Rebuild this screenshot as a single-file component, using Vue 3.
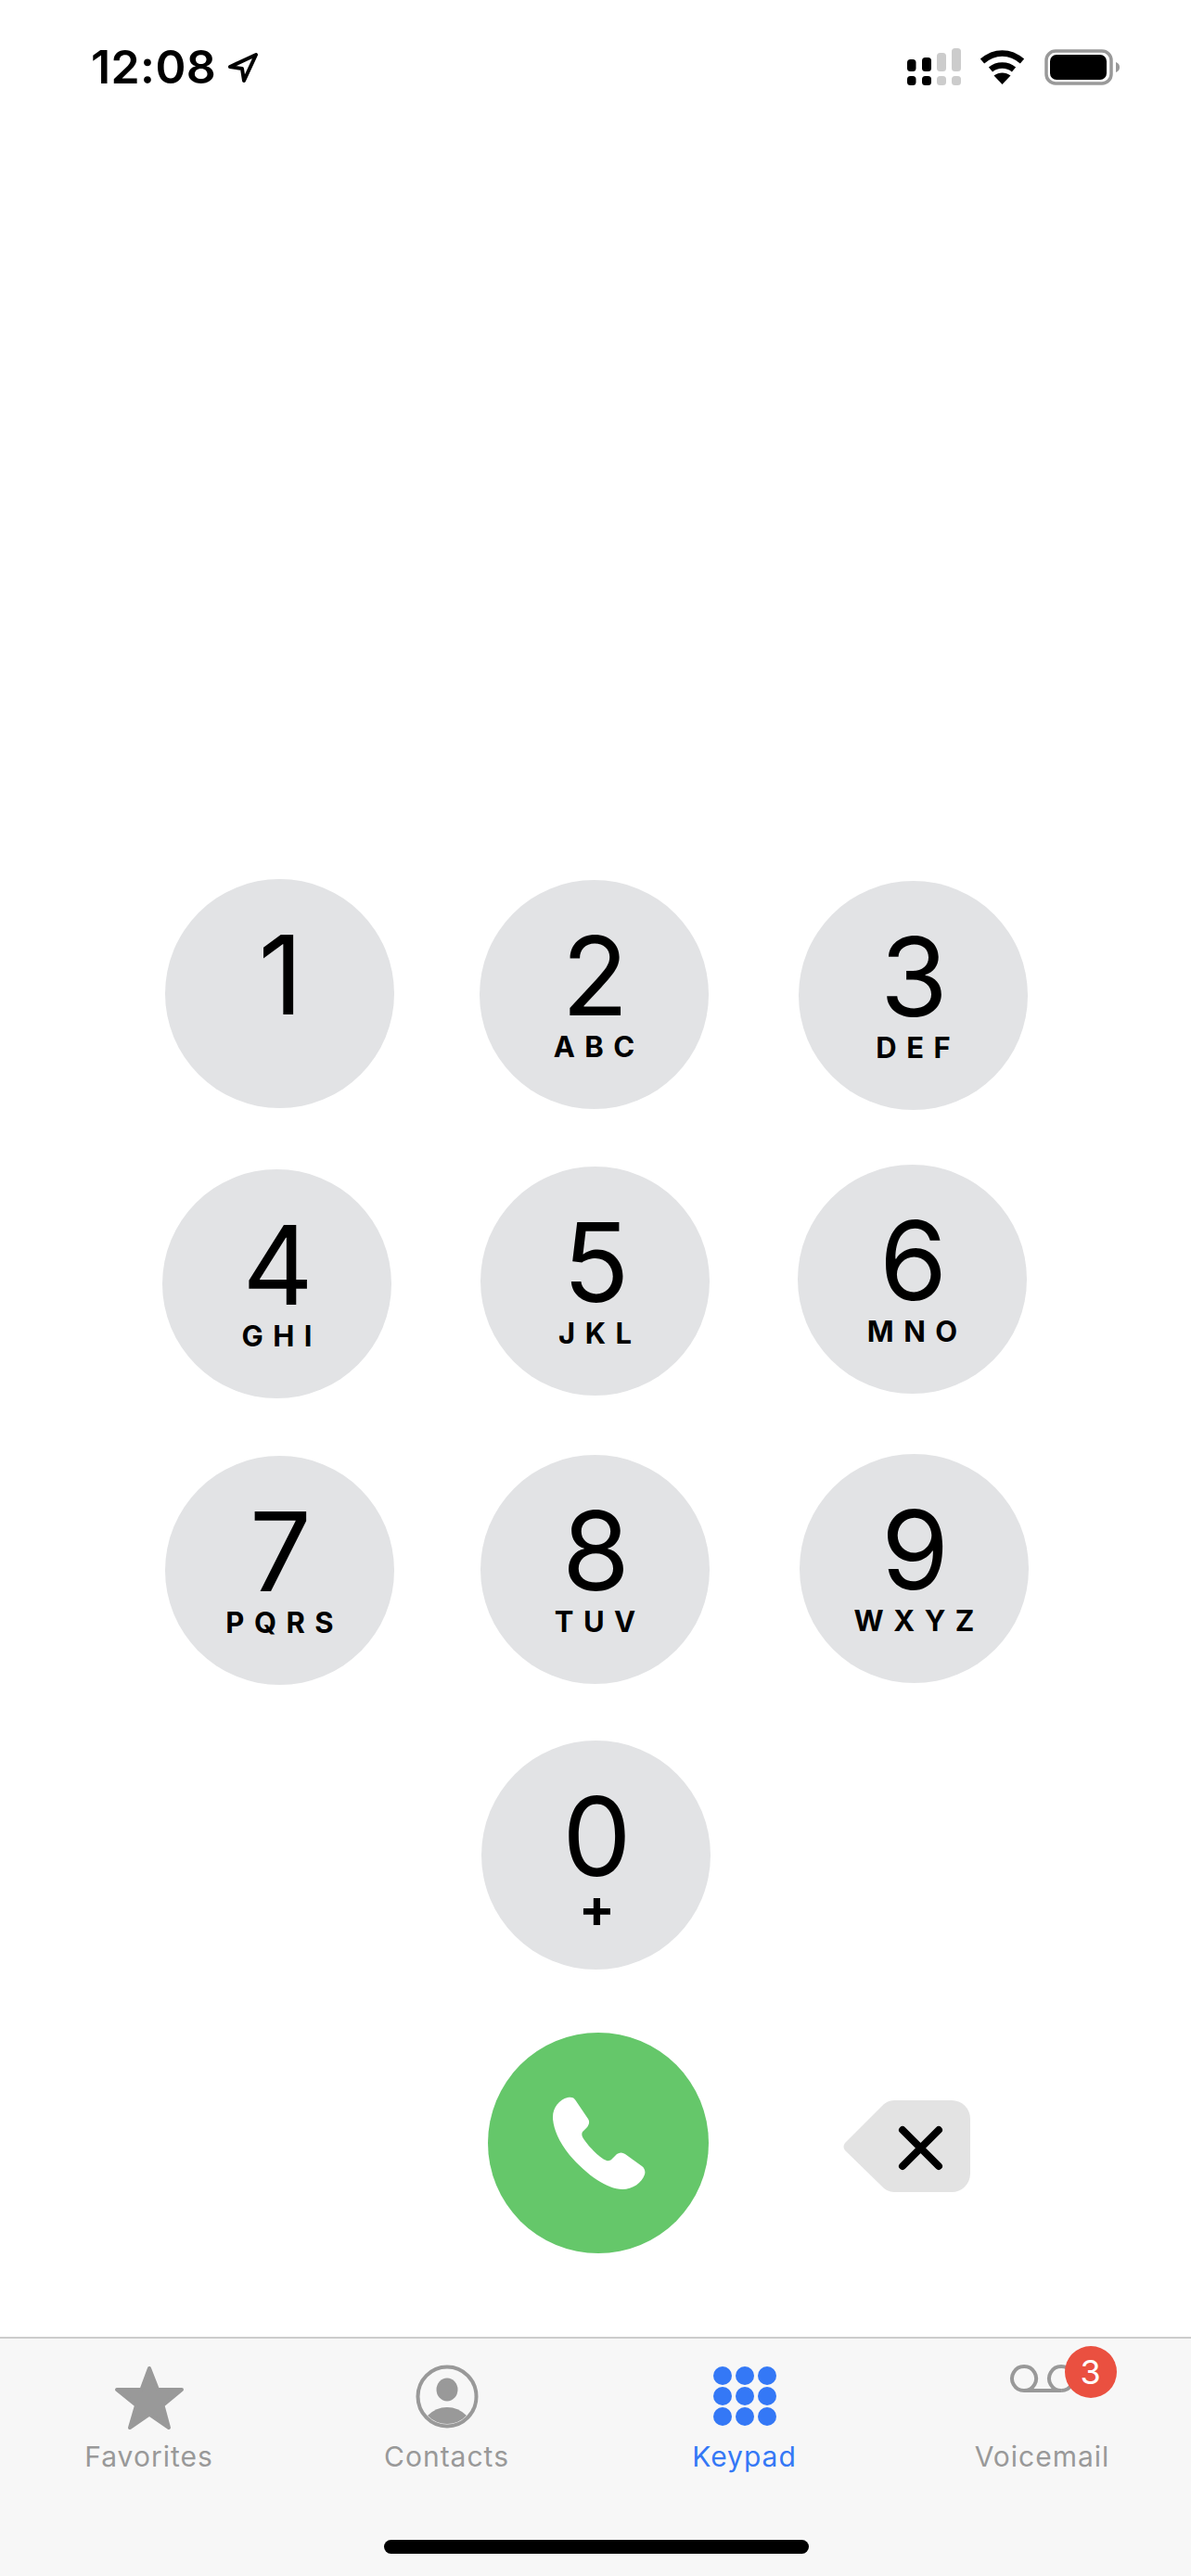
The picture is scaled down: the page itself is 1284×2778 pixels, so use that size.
<script setup>
const rows = [
  { gap: 0, keys: [
    { d: '1', l: '', ml: 178, mt: 0 },
    { d: '2', l: 'ABC', ml: 92, mt: 1 },
    { d: '3', l: 'DEF', ml: 97, mt: 2 },
  ] },
  { gap: 59, keys: [
    { d: '4', l: 'GHI', ml: 175, mt: 5 },
    { d: '5', l: 'JKL', ml: 96, mt: 2 },
    { d: '6', l: 'MNO', ml: 95, mt: 0 },
  ] },
  { gap: 60, keys: [
    { d: '7', l: 'PQRS', ml: 178, mt: 2 },
    { d: '8', l: 'TUV', ml: 93, mt: 1 },
    { d: '9', l: 'WXYZ', ml: 97, mt: 0 },
  ] },
  { gap: 60, keys: [
    { d: '0', l: '+', ml: 519, mt: 0 },
  ] },
]
const dots = [779, 803, 827].flatMap(x => [2562, 2584, 2606].map(y => ({ x, y })))
</script>

<template>
  <div class="phone">
    <header class="status">
      <div class="status-left">
        <span class="time">12:08</span>
        <svg class="arrow" width="34" height="34" viewBox="244 56 34 34">
          <path d="M247 72 L275 59 L262 87 L260 74 Z" fill="none" stroke="#000" stroke-width="4" stroke-linejoin="round" />
        </svg>
      </div>
      <div class="status-right">
        <svg width="58" height="40" viewBox="979 52 58 40">
          <rect x="979" y="64" width="9.5" height="13" rx="3.5" />
          <rect x="995" y="62" width="10" height="15" rx="3.5" />
          <rect x="1011" y="57" width="10" height="20" rx="3.5" fill="#ccc" />
          <rect x="1027" y="52" width="10" height="25" rx="3.5" fill="#ccc" />
          <rect x="979" y="82" width="9.5" height="10" rx="3.5" />
          <rect x="995" y="82" width="10" height="10" rx="3.5" />
          <rect x="1011" y="82" width="10" height="10" rx="3.5" fill="#ccc" />
          <rect x="1027" y="82" width="10" height="10" rx="3.5" fill="#ccc" />
        </svg>
        <svg class="wifi" width="50" height="38" viewBox="1057 54 50 38">
          <path d="M1060 66 C1073 54.500 1090 54.500 1103 66" fill="none" stroke="#000" stroke-width="6.500" />
          <path d="M1069 75 C1076 69 1087 69 1094 75" fill="none" stroke="#000" stroke-width="6.500" />
          <path d="M1072.500 81.500 C1078 77.500 1085 77.500 1090.500 81.500 L1081.500 91 Z" />
        </svg>
        <svg class="battery" width="82" height="40" viewBox="1127 52 82 40">
          <rect x="1129" y="55" width="70" height="35" rx="10" fill="none" stroke="#999" stroke-width="3.500" />
          <rect x="1133" y="59" width="61" height="27" rx="7" />
          <path d="M1204 67 C1207 68 1208 70 1208 72.500 C1208 75 1207 77 1204 78 Z" fill="#999" />
        </svg>
      </div>
    </header>

    <main class="pad">
      <div v-for="(row, r) in rows" :key="r" class="row" :style="{ marginTop: row.gap + 'px' }">
        <div
          v-for="key in row.keys"
          :key="key.d"
          class="key"
          :style="{ marginLeft: key.ml + 'px', marginTop: key.mt + 'px' }"
        >
          <span class="digit">{{ key.d }}</span>
          <span class="letters" :class="{ plus: key.l === '+' }">{{ key.l }}</span>
        </div>
      </div>

      <div class="call-row">
        <div class="call">
          <svg width="110" height="110" viewBox="590 2255 110 110">
            <path fill="#fff" d="M612 2261 C616 2260 619 2261 620.500 2264 L634 2284 C636 2287 635 2290 633 2293 L628 2298 C627 2300 627 2302 628.500 2304.500 C633 2312 646 2326 654 2329 C656 2329.500 658 2329 659 2328 L665 2322 C668 2320 671 2320 674 2322 L692 2335 C695 2337 696 2341 695 2344 C692 2353 682 2360 671 2360 C655 2360 633 2345 614 2323 C601 2307 596 2292 596 2282 C596 2272 603 2263 612 2261 Z" />
          </svg>
        </div>
        <svg class="backspace" width="138" height="100" viewBox="909 2264 138 100">
          <path fill="#e3e3e3" d="M964 2264 H1026 A20 20 0 0 1 1046 2284 V2343 A20 20 0 0 1 1026 2363 H964 Q956 2363 950 2356 L911 2318 Q908 2314 911 2310 L950 2271 Q956 2264 964 2264 Z" />
          <path d="M973 2296 L1012 2335 M1012 2296 L973 2335" stroke="#000" stroke-width="8" stroke-linecap="round" fill="none" />
        </svg>
      </div>
    </main>

    <nav class="tabs">
      <div class="tab">
        <svg width="76" height="72" viewBox="123 2550 76 72" fill="#999">
          <path stroke="#999" stroke-width="4" stroke-linejoin="round" d="M161 2554 L170 2577 L196 2577 L175.500 2594 L182 2618 L161 2603.500 L140 2618 L147 2594 L126 2577 L152.500 2577 Z" />
        </svg>
        <span>Favorites</span>
      </div>
      <div class="tab">
        <svg width="76" height="72" viewBox="444 2550 76 72" fill="#999">
          <ellipse cx="482" cy="2584.500" rx="31.500" ry="32" fill="none" stroke="#999" stroke-width="4" />
          <ellipse cx="482" cy="2577" rx="11.500" ry="12.500" />
          <path d="M461 2605 Q470 2596 482 2596 Q494 2596 503 2605 A29 29 0 0 1 461 2605 Z" />
        </svg>
        <span>Contacts</span>
      </div>
      <div class="tab active">
        <svg width="76" height="72" viewBox="765 2550 76 72" fill="#3478f6">
          <circle v-for="(p, i) in dots" :key="i" :cx="p.x" :cy="p.y" r="10" />
        </svg>
        <span>Keypad</span>
      </div>
      <div class="tab">
        <div class="vm">
          <svg width="76" height="72" viewBox="1086 2550 76 72">
            <path d="M1104 2578 A13 13 0 1 1 1104.100 2578 M1144 2578 A13 13 0 1 1 1144.100 2578 M1104 2578 H1144" fill="none" stroke="#999" stroke-width="4" />
          </svg>
          <span class="badge">3</span>
        </div>
        <span>Voicemail</span>
      </div>
      <div class="home"></div>
    </nav>
  </div>
</template>

<style scoped>
.phone {
  width: 1284px;
  height: 2778px;
  background: #fff;
  display: flex;
  flex-direction: column;
  font-family: Inter, "Liberation Sans", sans-serif;
  color: #000;
  overflow: hidden;
}
.status {
  height: 100px;
  padding: 42px 76px 0 98px;
  box-sizing: border-box;
  display: flex;
  justify-content: space-between;
  align-items: flex-start;
  flex: none;
}
.status-left {
  display: flex;
  align-items: center;
  gap: 12px;
}
.time {
  font-size: 50px;
  font-weight: 600;
  line-height: 60px;
  letter-spacing: 0.4px;
}
.arrow {
  margin-top: 2px;
}
.status-right {
  display: flex;
  align-items: flex-start;
  padding-top: 10px;
}
.wifi {
  margin-left: 20px;
  margin-top: 2px;
}
.battery {
  margin-left: 20px;
}
.pad {
  padding-top: 848px;
  flex: 1;
}
.row {
  display: flex;
  align-items: flex-start;
}
.key {
  width: 247px;
  height: 247px;
  border-radius: 50%;
  background: #e2e3e5;
  display: flex;
  flex-direction: column;
  align-items: center;
  flex: none;
}
.digit {
  font-size: 118px;
  font-weight: 400;
  line-height: 100px;
  height: 100px;
  margin-top: 53px;
  padding-left: 2px;
}
.letters {
  font-size: 31px;
  font-weight: 700;
  line-height: 32px;
  height: 32px;
  letter-spacing: 10.5px;
  padding-left: 10.5px;
  margin-top: 11px;
}
.letters.plus {
  font-size: 58px;
  letter-spacing: 0;
  padding-left: 2px;
}
.call-row {
  display: flex;
  align-items: flex-start;
  margin-top: 68px;
  padding-left: 526px;
}
.call {
  width: 238px;
  height: 238px;
  border-radius: 50%;
  background: #65c76a;
  display: flex;
  align-items: center;
  justify-content: center;
  flex: none;
}
.backspace {
  margin-left: 145px;
  margin-top: 73px;
}
.tabs {
  position: relative;
  height: 258px;
  box-sizing: border-box;
  border-top: 2px solid #ccc;
  background: #f7f7f7;
  display: grid;
  grid-template-columns: repeat(4, 321px);
  align-items: start;
  padding-top: 28px;
  flex: none;
}
.tab {
  display: flex;
  flex-direction: column;
  align-items: center;
  color: #999;
  font-size: 30px;
  line-height: 36px;
  letter-spacing: 1px;
}
.tab span:not(.badge) {
  margin-top: 9px;
}
.tab.active {
  color: #3478f6;
}
.vm {
  position: relative;
  height: 72px;
}
.badge {
  position: absolute;
  left: 62px;
  top: -20px;
  width: 56px;
  height: 56px;
  border-radius: 50%;
  background: #ea5040;
  color: #fff;
  font-size: 36px;
  line-height: 56px;
  text-align: center;
  letter-spacing: 0;
}
.home {
  position: absolute;
  left: 414px;
  bottom: 24px;
  width: 458px;
  height: 15px;
  border-radius: 8px;
  background: #000;
}
</style>
